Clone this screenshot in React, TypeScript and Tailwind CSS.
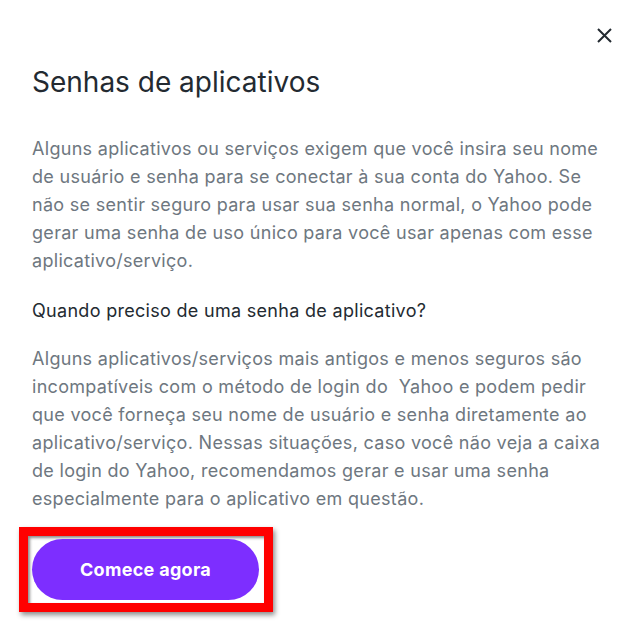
import { FC } from "react";

const para1 = [
  "Alguns aplicativos ou serviços exigem que você insira seu nome",
  "de usuário e senha para se conectar à sua conta do Yahoo. Se",
  "não se sentir seguro para usar sua senha normal, o Yahoo pode",
  "gerar uma senha de uso único para você usar apenas com esse",
  "aplicativo/serviço.",
];

const para2 = [
  "Alguns aplicativos/serviços mais antigos e menos seguros são",
  "incompatíveis com o método de login do\u00a0 Yahoo e podem pedir",
  "que você forneça seu nome de usuário e senha diretamente ao",
  "aplicativo/serviço. Nessas situações, caso você não veja a caixa",
  "de login do Yahoo, recomendamos gerar e usar uma senha",
  "especialmente para o aplicativo em questão.",
];

const App: FC = () => {
  return (
    <div
      className="w-[639px] h-[636px] bg-white relative overflow-hidden"
      style={{ fontFamily: "Inter, 'Noto Sans', sans-serif" }}
    >
      <button className="absolute right-[27px] top-[27px] w-[16px] h-[16px] flex items-center justify-center">
        <svg width="15" height="15" viewBox="0 0 15 15" fill="none">
          <path d="M1 1L14 14M14 1L1 14" stroke="#232a31" strokeWidth="2" />
        </svg>
      </button>

      <div className="pl-[32px] pr-[30px] pt-[64px]">
        <h1 className="text-[28px] leading-[36px] text-[#232a31] font-normal">
          Senhas de aplicativos
        </h1>

        <p className="mt-[35px] text-[18px] leading-[28px] text-[#6e7780] tracking-[0.3px]">
          {para1.map((l) => (
            <span key={l} className="block whitespace-nowrap">
              {l}
            </span>
          ))}
        </p>

        <h2 className="mt-[22px] text-[18px] leading-[28px] text-[#232a31] tracking-[0.3px]">
          Quando preciso de uma senha de aplicativo?
        </h2>

        <p className="mt-[20px] text-[18px] leading-[28px] text-[#6e7780] tracking-[0.3px]">
          {para2.map((l) => (
            <span key={l} className="block whitespace-nowrap">
              {l}
            </span>
          ))}
        </p>

        <div className="mt-[14px] -ml-[13px] inline-flex border-[9px] border-[#ff0000] pt-[3px] pb-[3px] pl-[4px] pr-[5px] shadow-[inset_2px_2px_3px_rgba(0,0,0,0.45),2px_3px_5px_rgba(0,0,0,0.45)]">
          <button className="w-[227px] h-[61px] rounded-full bg-[#7d2eff] text-white text-[18px] font-bold tracking-[0.3px]">
            Comece agora
          </button>
        </div>
      </div>
    </div>
  );
};

export default App;
